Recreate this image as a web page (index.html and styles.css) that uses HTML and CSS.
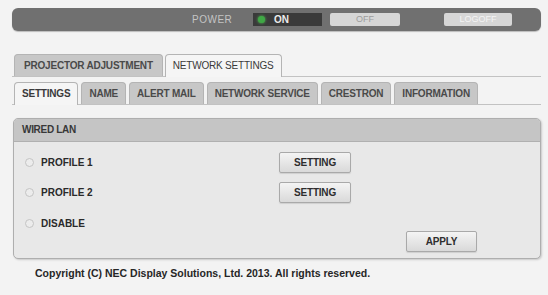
FILE: index.html
```html
<!DOCTYPE html>
<html lang="en">
<head>
  <meta charset="UTF-8">
  <meta name="viewport" content="width=device-width, initial-scale=1.0">
  <title>Network Settings</title>
  <link rel="stylesheet" href="styles.css">
</head>
<body>

  <div class="page">
    <div class="power-bar">
      <span class="power-label">POWER</span>
      <span class="power-on"><span class="led"></span>ON</span>
      <button type="button" class="bar-btn off">OFF</button>
      <button type="button" class="bar-btn logoff">LOGOFF</button>
    </div>

    <div class="tabs main-tabs">
      <span class="tab">PROJECTOR ADJUSTMENT</span>
      <span class="tab active">NETWORK SETTINGS</span>
    </div>

    <div class="tabs sub-tabs">
      <span class="tab active">SETTINGS</span>
      <span class="tab">NAME</span>
      <span class="tab">ALERT MAIL</span>
      <span class="tab">NETWORK SERVICE</span>
      <span class="tab">CRESTRON</span>
      <span class="tab">INFORMATION</span>
    </div>

    <div class="panel">
      <div class="panel-header">WIRED LAN</div>
      <div class="panel-body">
        <div class="row">
          <label class="option"><span class="radio"></span>PROFILE 1</label>
          <button type="button" class="btn">SETTING</button>
        </div>
        <div class="row">
          <label class="option"><span class="radio"></span>PROFILE 2</label>
          <button type="button" class="btn">SETTING</button>
        </div>
        <div class="row last">
          <label class="option"><span class="radio"></span>DISABLE</label>
          <button type="button" class="btn apply">APPLY</button>
        </div>
      </div>
    </div>

    <p class="copyright">Copyright (C) NEC Display Solutions, Ltd. 2013. All rights reserved.</p>
  </div>

</body>
</html>
```

FILE: styles.css
```css
body {
  margin: 0;
  background-color: #f3f3f3;
  font-family: "Liberation Sans", Arial, sans-serif;
  font-size: 10px;
  font-weight: bold;
  color: #2a2a2a;
}

.page {
  width: 529px;
  padding: 8px 0 0 12px;
}

/* top power bar */
.power-bar {
  display: flex;
  align-items: center;
  height: 23px;
  padding-left: 180px;
  background-color: #707070;
  border-radius: 6px;
  box-shadow: 0 1px 1px #bbb;
}

.power-label {
  width: 41px;
  color: #c4c4c4;
  font-weight: normal;
  letter-spacing: 0.5px;
}

.power-on {
  display: flex;
  align-items: center;
  width: 69px;
  height: 13px;
  margin-left: 20px;
  background-color: #3a3a3a;
  color: #ececec;
}

.led {
  width: 7px;
  height: 7px;
  margin: 0 9px 0 5px;
  border-radius: 50%;
  background-color: #3fa845;
  box-shadow: 0 0 3px #52c857;
}

.bar-btn {
  width: 70px;
  height: 13px;
  padding: 0;
  border: none;
  border-radius: 2px;
  background-color: #d6d6d6;
  font-family: inherit;
  font-size: 9px;
  font-weight: normal;
  line-height: 13px;
}

.off {
  margin-left: 8px;
  color: #9c9c9c;
}

.logoff {
  margin-left: 44px;
  width: 68px;
  color: #f4f4f4;
}

/* tabs */
.tabs {
  display: flex;
  gap: 3px;
  padding-left: 2px;
  border-bottom: 1px solid #c2c2c2;
}

.main-tabs {
  margin-top: 23px;
  gap: 2px;
}

.sub-tabs {
  margin-top: 5px;
}

.tab {
  height: 21px;
  padding: 0 7px;
  margin-bottom: -1px;
  line-height: 22px;
  background-color: #c7c7c7;
  border: 1px solid #b4b4b4;
  border-bottom: none;
  border-radius: 4px 4px 0 0;
  color: #4a4a4a;
  letter-spacing: -0.2px;
}

.main-tabs .tab:first-child {
  padding: 0 9px;
}

.tab.active {
  height: 22px;
  background-color: #f5f5f5;
  color: #3a3a3a;
  font-weight: normal;
}

.sub-tabs .tab.active {
  font-weight: bold;
}

/* wired lan panel */
.panel {
  margin: 13px 0 0 1px;
  background-color: #e8e8e8;
  border: 1px solid #aeaeae;
  border-radius: 5px;
  box-shadow: 1px 1px 2px #c8c8c8;
  overflow: hidden;
}

.panel-header {
  height: 22px;
  padding-left: 8px;
  line-height: 22px;
  background-color: #c5c5c5;
  border-bottom: 1px solid #b0b0b0;
  color: #383838;
  letter-spacing: -0.3px;
}

.panel-body {
  display: flex;
  flex-direction: column;
  gap: 9px;
  padding: 10px 0 6px 11px;
}

.row {
  display: flex;
  align-items: flex-start;
}

.row.last {
  margin-top: 1px;
}

.option {
  display: flex;
  align-items: center;
  width: 254px;
  height: 21px;
  color: #2a2a2a;
}

.radio {
  width: 7px;
  height: 7px;
  margin-right: 7px;
  border: 1px solid #c4c4c4;
  border-radius: 50%;
  background-color: #ececec;
}

.btn {
  width: 72px;
  height: 21px;
  padding: 0;
  border: 1px solid #a9a9a9;
  border-radius: 2px;
  background: linear-gradient(#f4f4f4, #d9d9d9);
  box-shadow: 0 1px 1px #cfcfcf;
  font-family: inherit;
  font-size: 10px;
  font-weight: bold;
  color: #2e2e2e;
  letter-spacing: -0.2px;
}

.apply {
  width: 71px;
  margin: 18px 0 0 127px;
}

.copyright {
  margin: 8px 0 0 23px;
  font-size: 10.5px;
  color: #262626;
}
```
